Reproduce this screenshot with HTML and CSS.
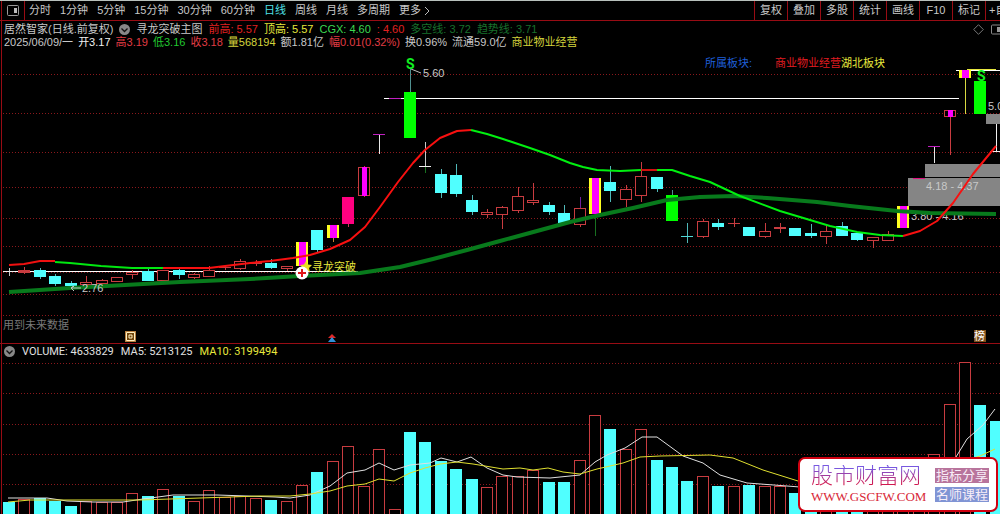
FILE: index.html
```html
<!DOCTYPE html>
<html lang="zh-CN">
<head>
<meta charset="utf-8">
<meta name="viewport" content="width=device-width, initial-scale=1">
<title>居然智家 日线</title>
<link rel="stylesheet" href="styles.css">
</head>
<body>
<main class="terminal">
  <nav class="toolbar">
    <button class="layout-toggle" type="button" aria-label="布局">
      <svg width="12" height="11" viewBox="0 0 12 11"><rect x=".5" y=".5" width="11" height="10" rx="1" fill="none" stroke="#999"/><rect x="7" y="3" width="3" height="5" fill="#bbb"/></svg>
    </button>
    <div class="periods">
      <button type="button">分时</button>
      <button type="button">1分钟</button>
      <button type="button">5分钟</button>
      <button type="button">15分钟</button>
      <button type="button">30分钟</button>
      <button type="button">60分钟</button>
      <button type="button" class="active">日线</button>
      <button type="button">周线</button>
      <button type="button">月线</button>
      <button type="button">多周期</button>
      <button type="button" class="more">更多
        <svg width="6" height="10" viewBox="0 0 6 10"><path d="M1 1L5 5L1 9" fill="none" stroke="#bbb"/></svg>
      </button>
    </div>
    <div class="tools">
      <button type="button">复权</button>
      <button type="button">叠加</button>
      <button type="button">多股</button>
      <button type="button">统计</button>
      <button type="button">画线</button>
      <button type="button">F10</button>
      <button type="button">标记</button>
      <button type="button" class="clipped">+自</button>
    </div>
  </nav>

  <section class="price-panel">
    <header class="info">
      <div class="info-row indicator-row">
        <span>居然智家(日线.前复权)</span>
        <svg class="chevron" width="11" height="11" viewBox="0 0 11 11"><circle cx="5.5" cy="5.5" r="5.5" fill="#888"/><path d="M2.5 4.5L5.5 7.5L8.5 4.5" fill="none" stroke="#111" stroke-width="1.3"/></svg>
        <span>寻龙突破主图</span>
        <span class="red">前高: 5.57</span>
        <span class="yellow">顶高: 5.57</span>
        <span class="lime">CGX: 4.60</span>
        <span class="red">: 4.60</span>
        <span class="forest">多空线: 3.72</span>
        <span class="forest">趋势线: 3.71</span>
        <span class="corner">
          <svg width="27" height="11" viewBox="0 0 27 11"><path d="M5.5 .7L10.3 5.5L5.5 10.3L.7 5.5Z" fill="none" stroke="#777"/><rect x="18.5" y="1" width="12" height="9" rx="1" fill="none" stroke="#888"/><rect x="24" y="3" width="3" height="5" fill="#999"/></svg>
        </span>
      </div>
      <div class="info-row quote-row">
        <span>2025/06/09/一</span>
        <span class="white">开3.17</span>
        <span class="rose">高3.19</span>
        <span class="green">低3.16</span>
        <span class="rose">收3.18</span>
        <span class="gold">量568194</span>
        <span>额1.81亿</span>
        <span class="rose">幅0.01(0.32%)</span>
        <span>换0.96%</span>
        <span>流通59.0亿</span>
        <span class="gold">商业物业经营</span>
      </div>
    </header>
    <svg class="chart" id="price" viewBox="0 50 1000 293" role="img" aria-label="日K线图"></svg>
  </section>

  <section class="volume-panel">
    <header class="volume-row">
      <svg class="chevron" width="11" height="11" viewBox="0 0 11 11"><circle cx="5.5" cy="5.5" r="5.5" fill="#888"/><path d="M2.5 4.5L5.5 7.5L8.5 4.5" fill="none" stroke="#111" stroke-width="1.3"/></svg>
      <span>VOLUME: 4633829</span>
      <span>MA5: 5213125</span>
      <span class="yellow">MA10: 3199494</span>
    </header>
    <svg class="chart" id="volume" viewBox="0 359 1000 155" role="img" aria-label="成交量"></svg>
  </section>

  <aside class="brand">
    <div class="brand-name">
      <strong>股市财富网</strong>
      <span>WWW.GSCFW.COM</span>
    </div>
    <div class="brand-tags">
      <span class="tag tag-rose">指标分享</span>
      <span class="tag tag-blue">名师课程</span>
    </div>
  </aside>
</main>
<script src="chart.js"></script>
</body>
</html>
```
FILE: styles.css
```css
* { box-sizing: border-box; }
body {
  margin: 0;
  background: #000;
  color: #c8c8c8;
  font: 11px/13px "Liberation Sans", "Noto Sans CJK SC", sans-serif;
}
.terminal {
  position: relative;
  overflow: hidden;
  border-top: 1px solid #b8c0bc;
  background: linear-gradient(#980c14, #980c14) 1px 0 / 1px 100% no-repeat #000;
}
button {
  margin: 0;
  padding: 0;
  border: 0;
  background: none;
  color: inherit;
  font: inherit;
  white-space: nowrap;
}
.toolbar {
  display: flex;
  align-items: stretch;
  height: 20px;
  border-bottom: 1px solid #980c14;
}
.layout-toggle {
  display: flex;
  align-items: center;
  padding: 0 5px 0 7px;
  border-right: 1px solid #980c14;
}
.periods {
  display: flex;
  align-items: center;
  gap: 9px;
  padding-left: 4px;
}
.periods .active { color: #4fe0e8; }
.more { display: flex; align-items: center; gap: 3px; }
.tools { display: flex; margin-left: auto; }
.tools button {
  width: 33px;
  border-left: 1px solid #980c14;
}
.tools .clipped { width: 15px; overflow: hidden; padding-left: 3px; text-align: left; }

.price-panel { border-bottom: 1px solid #980c14; }
.info { padding: 2px 0 1px 4px; }
.info-row { display: flex; align-items: center; white-space: nowrap; }
.indicator-row { gap: 6px; }
.quote-row { gap: 5px; }
.corner { display: flex; margin-left: auto; }
.chevron { flex: none; }
.chart { display: block; width: 100%; height: auto; }

.volume-row {
  display: flex;
  align-items: center;
  gap: 7px;
  height: 15px;
  padding-left: 4px;
  color: #e0e0e0;
  font-family: Roboto, "Noto Sans CJK SC", sans-serif;
}

.white { color: #f0f0f0; }
.red { color: #e02020; }
.rose { color: #e03c44; }
.yellow { color: #e8e83c; }
.gold { color: #d4d43c; }
.lime { color: #3cd850; }
.green { color: #20c830; }
.forest { color: #17702c; }

.grid { stroke: #8a181c; stroke-dasharray: 1 2; }
.up { fill: #000; stroke: #c83c40; }
.up-flat { fill: #c83c40; }
.down { fill: #50ffff; }
.limit { fill: #00ff00; }
.pink { fill: #ff0080; }
.magenta { fill: #ff00ff; }
.signal { fill: #ffff20; }
.zone { fill: #858585; }
.line { fill: none; stroke-linejoin: round; }
.mark { font-family: "Liberation Sans", "Noto Sans CJK SC", sans-serif; font-size: 11px; fill: #c8c8c8; }
.mark-blue { fill: #1f5fd8; }
.mark-red { fill: #e01c20; }
.mark-yellow { fill: #e8e83c; }
.mark-dim { fill: #787878; }
.mark-white { fill: #fff; }
.mark-sell { fill: #10f020; font-family: Roboto, sans-serif; font-size: 14px; font-weight: bold; }

.brand {
  position: absolute;
  right: 2px;
  bottom: 2px;
  display: flex;
  align-items: center;
  justify-content: space-between;
  width: 200px;
  height: 55px;
  padding: 0 7px 0 11px;
  border: 2px solid #d00010;
  border-radius: 7px;
  background: #fff;
}
.brand-name { display: flex; flex-direction: column; gap: 2px; }
.brand-name strong {
  color: transparent;
  background: linear-gradient(#7858e0 15%, #d01850 85%);
  background-clip: text;
  -webkit-background-clip: text;
  font-size: 22px;
  line-height: 22px;
  font-weight: 300;
}
.brand-name span {
  color: #d82838;
  font: 13px/16px "Liberation Serif", serif;
}
.brand-tags { display: flex; flex-direction: column; gap: 4px; }
.tag { padding: 0 1px; color: #f8eef8; font-size: 13px; line-height: 15px; }
.tag-rose { background: #b8749c; }
.tag-blue { background: #8094d4; }
```
FILE: chart.js
```js
const NS = "http://www.w3.org/2000/svg";
const cx = i => Math.round(9 + 15.42 * i);

function add(svg, tag, attrs, text) {
  const el = document.createElementNS(NS, tag);
  for (const k in attrs) el.setAttribute(k, attrs[k]);
  if (text) el.textContent = text;
  svg.appendChild(el);
}
function rect(svg, cls, x, y, w, h) {
  add(svg, "rect", { class: cls, x, y, width: w, height: h });
}
function fill(svg, color, x, y, w, h) {
  add(svg, "rect", { fill: color, x, y, width: w, height: h });
}
function line(svg, points, color, width) {
  add(svg, "polyline", { class: "line", points, stroke: color, "stroke-width": width });
}
function label(svg, t, x, y, c) {
  add(svg, "text", { class: "mark " + c, x, y }, t);
}
function grid(svg, rows) {
  rows.forEach(y => add(svg, "line", { class: "grid", x1: 3, x2: 1000, y1: y + 0.5, y2: y + 0.5 }));
}

// kind, body top, body bottom, high, low
const candles = [
  ["w", 271, 272, 268, 276], ["f", 270, 273, 267, 274], ["c", 270, 277, 268, 279], ["c", 276, 284, 274, 286],
  ["c", 283, 286, 281, 289], ["r", 282, 285, 276, 286], ["r", 280, 284, 279, 285], ["r", 277, 282, 277, 282],
  ["r", 272, 275, 270, 279], ["c", 271, 281, 269, 281], ["r", 270, 281, 270, 281], ["c", 270, 275, 269, 279],
  ["r", 274, 278, 273, 279], ["r", 270, 277, 266, 277], ["f", 267, 268, 265, 270], ["r", 261, 269, 259, 270],
  ["f", 262, 264, 260, 266], ["c", 263, 268, 259, 269], ["r", 266, 269, 266, 271], ["y", 242, 266, 242, 266],
  ["c", 230, 250, 230, 253], ["y", 225, 238, 225, 242], ["p", 197, 224, 197, 227], ["m", 167, 196, 166, 197],
  ["t", 134, 135, 134, 154], ["d", 98, 99, 98, 99], ["g", 92, 138, 68, 138], ["w", 166, 167, 142, 173],
  ["c", 174, 193, 169, 198], ["c", 175, 194, 164, 197], ["c", 200, 212, 195, 215], ["r", 212, 215, 209, 218],
  ["r", 207, 215, 206, 229], ["r", 196, 211, 187, 213], ["r", 200, 203, 183, 205], ["c", 205, 212, 202, 215],
  ["c", 213, 224, 205, 224], ["r", 208, 225, 197, 227], ["y", 178, 214, 178, 236], ["c", 182, 191, 166, 202],
  ["r", 189, 200, 185, 207], ["r", 176, 196, 162, 202], ["c", 177, 189, 177, 192], ["g", 195, 221, 190, 221],
  ["x", 236, 237, 223, 243], ["r", 221, 237, 219, 238], ["c", 223, 227, 219, 230], ["f", 223, 224, 218, 227],
  ["c", 227, 236, 227, 236], ["r", 231, 237, 223, 238], ["r", 227, 229, 223, 233], ["c", 228, 236, 228, 236],
  ["c", 233, 236, 224, 238], ["r", 231, 237, 225, 244], ["c", 226, 236, 222, 236], ["c", 233, 240, 233, 241],
  ["r", 237, 241, 237, 248], ["r", 234, 241, 231, 241], ["y", 206, 228, 206, 228], ["q", 178, 179, 178, 179],
  ["t", 146, 147, 146, 163], ["m", 110, 117, 110, 155], ["y", 70, 78, 70, 114], ["g", 81, 114, 81, 114],
  ["w", 151, 152, 114, 152]
];
const wick = { w: "#c8c8c8", f: "#c83c40", c: "#50b8b8", r: "#c83c40", y: "#c88030", p: "#c83c60", m: "#c83c40",
  t: "#e8e8e8", d: "#c020c0", g: "#509090", x: "#50b8b8", q: "#e01080" };

function drawPrice(svg) {
  grid(svg, [74, 113, 152, 187, 218, 246, 272, 294, 315]);
  fill(svg, "#fff", 3, 271, 355, 1);
  fill(svg, "#fff", 384, 98, 575, 1);
  fill(svg, "#fff", 956, 70, 44, 1);

  candles.forEach(([k, top, bottom, high, low], i) => {
    const x = cx(i), h = bottom - top;
    let color = wick[k];
    if (i === 38) color = "#187020";
    if (i === 62) color = "#d8d840";
    fill(svg, color, x, high, 1, low - high);
    if (k === "c") rect(svg, "down", x - 6, top, 12, h);
    else if (k === "g") rect(svg, "limit", x - 6, top, 12, h);
    else if (k === "p") rect(svg, "pink", x - 6, top, 12, h);
    else if (k === "f") rect(svg, "up-flat", x - 6, top, 12, h);
    else if (k === "r") rect(svg, "up", x - 5.5, top + 0.5, 11, h - 1);
    else if (k === "m") {
      rect(svg, "up", x - 5.5, top + 0.5, 11, h - 1);
      rect(svg, "magenta", x - 2, top, 5, h);
    } else if (k === "y") {
      rect(svg, "signal", x - 6, top, 12, h);
      rect(svg, "magenta", x - 3, top, 7, h);
    } else {
      const bar = { w: "#f0f0f0", t: "#c020c0", d: "#c020c0", x: "#50d8d8", q: "#e01080" }[k];
      fill(svg, bar, x - 6, top, 12, 1);
    }
  });
  fill(svg, "#187020", cx(27), 167, 1, 6);
  fill(svg, "#7020a0", cx(37), 197, 1, 11);
  fill(svg, "#e8e840", 967, 69, 29, 1);

  rect(svg, "zone", 986, 114, 14, 10);
  rect(svg, "zone", 925, 164, 75, 13);
  rect(svg, "zone", 908, 178, 92, 28);
  fill(svg, "#e01080", 913, 178, 12, 1);
  fill(svg, "#f0f0f0", 996, 124, 1, 27);
  label(svg, "4.18 - 4.37", 926, 190, "");
  label(svg, "3.80 - 4.16", 911, 220, "");

  line(svg, "9,292 70,288 125,285 180,282 250,279 300,276 360,273 400,267 433,259 467,250 500,241 537,231 570,222 600,215 633,208 667,200 700,197 733,196 767,198 817,202 850,206 897,211 930,213 996,214", "#087a1c", 4);
  line(svg, "9,265 24,264 40,261 55,261", "#f01010", 2);
  line(svg, "55,262 70,263 101,266 132,268 163,268", "#00e810", 2);
  line(svg, "163,268 209,268 225,266 250,263 270,261 293,258 310,255 330,249 350,240 365,227 380,207 398,182 413,163 425,150 440,138 457,131 471,130", "#f81010", 2);
  line(svg, "471,130 487,134 503,139 518,144 530,148 550,155 570,163 583,167 597,170 620,171 641,170", "#00f010", 2);
  line(svg, "641,170 657,170", "#d01010", 2);
  line(svg, "657,170 672,170 690,176 710,182 740,196 780,211 810,220 830,226 857,232 880,235 903,236", "#00f010", 2);
  line(svg, "903,236 920,231 937,221 953,203 973,174 996,146", "#f81010", 2);

  line(svg, "411,69 421,73", "#c0c0c0", 1);
  line(svg, "81,288 71,288 74,286 71,288 74,291", "#c0c0c0", 1);
  [
    ["5.0", 988, 110, ""], ["所属板块:", 705, 67, "mark-blue"], ["商业物业经营", 775, 67, "mark-red"],
    ["湖北板块", 841, 67, "mark-yellow"], ["5.60", 423, 77, ""], ["2.76", 82, 292, ""],
    ["寻龙突破", 312, 271, "mark-yellow"], ["用到未来数据", 3, 329, "mark-dim"],
    ["S", 406, 69, "mark-sell"], ["S", 977, 81, "mark-sell"]
  ].forEach(m => label(svg, ...m));

  // buy marker
  add(svg, "path", { fill: "#e8e020", d: "M306 261L308 264.5L312 265L309 268L310 272L306 270L302 272L303 268L300 265L304 264.5Z" });
  add(svg, "circle", { cx: 302, cy: 273, r: 6.5, fill: "#fff" });
  add(svg, "path", { d: "M302 269V277M298 273H306", stroke: "#e01818", "stroke-width": 2 });

  // event badges on the time axis
  fill(svg, "#b88040", 125, 331, 11, 11);
  add(svg, "path", { d: "M126.5 332.5h8v8h-8zM129 335h3v3h-3z", fill: "#70450c", stroke: "#fff0c0", "stroke-width": 1 });
  fill(svg, "#80501c", 974, 330, 12, 12);
  label(svg, "榜", 974, 340, "mark-white");
  add(svg, "path", { fill: "#e02828", d: "M332 334L336 338H333V339H331V338H328Z" });
  add(svg, "path", { fill: "#3090d8", d: "M332 337L336 342H328Z" });
}

// kind (c = down, r = up), bar top
const volumes = "c502 r499 c498 c501 c506 r501 r502 r502 r493 c496 r489 c496 r501 r490 r497 r496 r498 c500 r501 r485 c472 r461 r446 r486 r449 r509 c432 c442 c461 c469 c479 r487 r476 r476 r470 c482 c482 r460 r415 c429 r449 r429 c460 c467 c481 r476 c486 r486 c485 r486 r486 c493 c493 r496 c498 c498 r498 r498 r496 r490 r454 r404 r362 c405 c421".split(" ");

function drawVolume(svg) {
  grid(svg, [363, 393, 424, 454, 484]);
  volumes.forEach((v, i) => {
    const top = +v.slice(1), x = cx(i);
    if (v[0] === "c") rect(svg, "down", x - 6, top, 12, 514 - top);
    else rect(svg, "up", x - 5.5, top + 0.5, 11, 520 - top);
  });
  line(svg, "8,498 47,498 67,501 93,502 123,502 143,499 173,495 217,495 247,496 275,497 290,498 310,495 330,486 347,473 365,470 379,463 394,470 410,465 430,463 441,458 457,462 471,457 487,468 503,475 517,477 550,478 580,475 595,462 607,455 625,448 642,437 657,437 683,456 703,463 720,475 747,483 787,486 800,487 920,487 956,457 967,439 983,425 995,409", "#e0e0e0", 1);
  line(svg, "8,502 30,500 140,500 200,498 260,496 290,496 310,494 330,491 347,486 365,484 379,479 394,481 410,473 425,468 440,464 457,462 473,464 503,469 520,468 533,470 548,468 563,472 580,474 597,469 623,463 640,457 660,456 710,455 733,458 748,464 763,470 798,481 900,481 980,456 995,449", "#e0e030", 1);
}

drawPrice(document.getElementById("price"));
drawVolume(document.getElementById("volume"));
```
